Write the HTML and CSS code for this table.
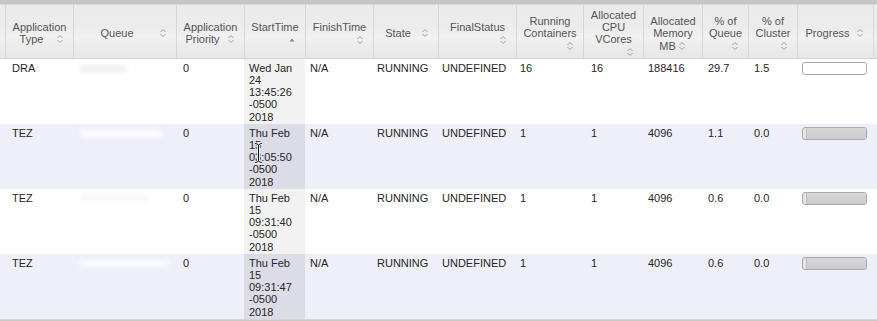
FILE: index.html
```html
<!DOCTYPE html>
<html>
<head>
<meta charset="utf-8">
<title>Applications</title>
<link rel="stylesheet" href="styles.css">
</head>
<body>
<div class="frame">
  <div class="topbar"></div>
  <table class="apps">
    <colgroup>
      <col class="w-gut"><col class="w-type"><col class="w-queue"><col class="w-prio"><col class="w-start"><col class="w-finish"><col class="w-state"><col class="w-final"><col class="w-run"><col class="w-vc"><col class="w-mem"><col class="w-pq"><col class="w-pc"><col class="w-prog"><col class="w-last">
    </colgroup>
    <thead>
      <tr>
        <th class="gut"></th>
        <th><div class="sw">Application Type<span class="si"><svg width="16" height="12" viewBox="0 0 16 12"><path d="M5.5 5 L8 2.5 L10.5 5 M5.5 7 L8 9.5 L10.5 7" fill="none" stroke="#a0a0a0"/></svg></span></div></th>
        <th><div class="sw">Queue<span class="si"><svg width="16" height="12" viewBox="0 0 16 12"><path d="M5.5 5 L8 2.5 L10.5 5 M5.5 7 L8 9.5 L10.5 7" fill="none" stroke="#a0a0a0"/></svg></span></div></th>
        <th><div class="sw">Application Priority<span class="si"><svg width="16" height="12" viewBox="0 0 16 12"><path d="M5.5 5 L8 2.5 L10.5 5 M5.5 7 L8 9.5 L10.5 7" fill="none" stroke="#a0a0a0"/></svg></span></div></th>
        <th><div class="sw">StartTime<span class="si"><svg width="16" height="12" viewBox="0 0 16 12"><path d="M5.5 7.5 L8 4.5 L10.5 7.5 Z" fill="#8a8a8a"/></svg></span></div></th>
        <th><div class="sw">FinishTime<span class="si"><svg width="16" height="12" viewBox="0 0 16 12"><path d="M5.5 5 L8 2.5 L10.5 5 M5.5 7 L8 9.5 L10.5 7" fill="none" stroke="#a0a0a0"/></svg></span></div></th>
        <th><div class="sw">State<span class="si"><svg width="16" height="12" viewBox="0 0 16 12"><path d="M5.5 5 L8 2.5 L10.5 5 M5.5 7 L8 9.5 L10.5 7" fill="none" stroke="#a0a0a0"/></svg></span></div></th>
        <th><div class="sw">FinalStatus<span class="si"><svg width="16" height="12" viewBox="0 0 16 12"><path d="M5.5 5 L8 2.5 L10.5 5 M5.5 7 L8 9.5 L10.5 7" fill="none" stroke="#a0a0a0"/></svg></span></div></th>
        <th><div class="sw">Running Containers<span class="si"><svg width="16" height="12" viewBox="0 0 16 12"><path d="M5.5 5 L8 2.5 L10.5 5 M5.5 7 L8 9.5 L10.5 7" fill="none" stroke="#a0a0a0"/></svg></span></div></th>
        <th><div class="sw">Allocated CPU VCores<span class="si"><svg width="16" height="12" viewBox="0 0 16 12"><path d="M5.5 5 L8 2.5 L10.5 5 M5.5 7 L8 9.5 L10.5 7" fill="none" stroke="#a0a0a0"/></svg></span></div></th>
        <th><div class="sw">Allocated Memory MB<span class="si inl"><svg width="10" height="12" viewBox="3 0 10 12"><path d="M5.5 5 L8 2.5 L10.5 5 M5.5 7 L8 9.5 L10.5 7" fill="none" stroke="#a0a0a0"/></svg></span></div></th>
        <th><div class="sw">% of Queue<span class="si"><svg width="16" height="12" viewBox="0 0 16 12"><path d="M5.5 5 L8 2.5 L10.5 5 M5.5 7 L8 9.5 L10.5 7" fill="none" stroke="#a0a0a0"/></svg></span></div></th>
        <th><div class="sw">% of Cluster<span class="si"><svg width="16" height="12" viewBox="0 0 16 12"><path d="M5.5 5 L8 2.5 L10.5 5 M5.5 7 L8 9.5 L10.5 7" fill="none" stroke="#a0a0a0"/></svg></span></div></th>
        <th><div class="sw">Progress<span class="si"><svg width="16" height="12" viewBox="0 0 16 12"><path d="M5.5 5 L8 2.5 L10.5 5 M5.5 7 L8 9.5 L10.5 7" fill="none" stroke="#a0a0a0"/></svg></span></div></th>
        <th class="last"></th>
      </tr>
    </thead>
    <tbody>
      <tr class="odd">
        <td class="gut"></td>
        <td class="c-type">DRA</td>
        <td class="c-queue"><span class="redact r1"></span></td>
        <td class="c-prio">0</td>
        <td class="c-start sorted">Wed Jan 24 13:45:26 -0500 2018</td>
        <td>N/A</td>
        <td class="c-state">RUNNING</td>
        <td class="c-final">UNDEFINED</td>
        <td class="c-run">16</td>
        <td class="c-vc">16</td>
        <td>188416</td>
        <td class="c-pq">29.7</td>
        <td class="c-pc">1.5</td>
        <td><div class="pbar"></div></td>
        <td></td>
      </tr>
      <tr class="even">
        <td class="gut"></td>
        <td class="c-type">TEZ</td>
        <td class="c-queue"><span class="redact r2"></span></td>
        <td class="c-prio">0</td>
        <td class="c-start sorted">Thu Feb 15 03:05:50 -0500 2018</td>
        <td>N/A</td>
        <td class="c-state">RUNNING</td>
        <td class="c-final">UNDEFINED</td>
        <td class="c-run">1</td>
        <td class="c-vc">1</td>
        <td>4096</td>
        <td class="c-pq">1.1</td>
        <td class="c-pc">0.0</td>
        <td><div class="pbar"><div class="pval"></div></div></td>
        <td></td>
      </tr>
      <tr class="odd">
        <td class="gut"></td>
        <td class="c-type">TEZ</td>
        <td class="c-queue"><span class="redact r3"></span></td>
        <td class="c-prio">0</td>
        <td class="c-start sorted">Thu Feb 15 09:31:40 -0500 2018</td>
        <td>N/A</td>
        <td class="c-state">RUNNING</td>
        <td class="c-final">UNDEFINED</td>
        <td class="c-run">1</td>
        <td class="c-vc">1</td>
        <td>4096</td>
        <td class="c-pq">0.6</td>
        <td class="c-pc">0.0</td>
        <td><div class="pbar"><div class="pval"></div></div></td>
        <td></td>
      </tr>
      <tr class="even">
        <td class="gut"></td>
        <td class="c-type">TEZ</td>
        <td class="c-queue"><span class="redact r4"></span></td>
        <td class="c-prio">0</td>
        <td class="c-start sorted">Thu Feb 15 09:31:47 -0500 2018</td>
        <td>N/A</td>
        <td class="c-state">RUNNING</td>
        <td class="c-final">UNDEFINED</td>
        <td class="c-run">1</td>
        <td class="c-vc">1</td>
        <td>4096</td>
        <td class="c-pq">0.6</td>
        <td class="c-pc">0.0</td>
        <td><div class="pbar"><div class="pval"></div></div></td>
        <td></td>
      </tr>
    </tbody>
  </table>
  <div class="bottombar"></div>
  <svg class="cursor" width="9" height="22" viewBox="0 0 9 22">
    <path d="M1 1.5 Q4.5 1.5 4.5 3.5 Q4.5 1.5 8 1.5 M4.5 3.5 V18.5 M1 20.5 Q4.5 20.5 4.5 18.5 Q4.5 20.5 8 20.5" fill="none" stroke="#ffffff" stroke-width="2.6"/>
    <path d="M1 1.5 Q4.5 1.5 4.5 3.5 Q4.5 1.5 8 1.5 M4.5 3.5 V18.5 M1 20.5 Q4.5 20.5 4.5 18.5 Q4.5 20.5 8 20.5" fill="none" stroke="#111111" stroke-width="1"/>
  </svg>
</div>
</body>
</html>
```

FILE: styles.css
```css
html, body {
  margin: 0;
  padding: 0;
  background: #ffffff;
}

.frame {
  position: relative;
  width: 877px;
  height: 321px;
  overflow: hidden;
  font-family: "Liberation Sans", Arial, sans-serif;
  font-size: 11px;
  line-height: 12.2px;
  color: #262626;
}

.topbar {
  height: 4px;
  background: #c6c6c6;
  border-bottom: 1px solid #dadada;
}

.apps {
  table-layout: fixed;
  border-collapse: separate;
  border-spacing: 0;
  width: 893px;
}

.w-gut { width: 5px; }
.w-type { width: 68px; }
.w-queue { width: 103px; }
.w-prio { width: 68px; }
.w-start { width: 61px; }
.w-finish { width: 68px; }
.w-state { width: 65px; }
.w-final { width: 78px; }
.w-run { width: 67px; }
.w-vc { width: 60px; }
.w-mem { width: 59px; }
.w-pq { width: 46px; }
.w-pc { width: 49px; }
.w-prog { width: 76px; }
.w-last { width: 20px; }

.apps th {
  padding: 4px 5px 0 5px;
  font-weight: normal;
  color: #555555;
  text-align: center;
  vertical-align: middle;
  background: linear-gradient(#ebebeb 0%, #ececec 45%, #f1f1f1 62%, #ebebeb 78%, #e8e8e8 100%);
  border-left: 1px solid #d6d6d6;
  border-bottom: 1px solid #d3d3d3;
}

.apps th.gut {
  padding: 0;
  border-left: none;
}

.sw {
  text-align: center;
}

.si {
  float: right;
  width: 16px;
  height: 12.2px;
  display: flex;
  align-items: center;
  justify-content: center;
}

.si svg {
  display: block;
}

.si.inl {
  float: none;
  display: inline-flex;
  width: 10px;
  vertical-align: top;
  margin-left: 1px;
}

.apps td {
  padding: 3px 5px 1px 5px;
  vertical-align: top;
  text-align: left;
  white-space: normal;
}

.apps td.gut {
  padding: 0;
}

tr.odd td { background: #ffffff; }
tr.even td { background: #efeffa; }
tr.odd td.sorted { background: #f2f2f2; }
tr.even td.sorted { background: #dcdce7; }

.c-type { padding-left: 7px !important; }
.c-prio { padding-left: 7px !important; }
.c-state, .c-final, .c-run { padding-left: 4px !important; }
.c-vc { padding-left: 8px !important; }
.c-pq, .c-pc { padding-left: 6px !important; }

.redact {
  display: block;
  height: 7px;
  margin: 3px 0 0 2px;
  filter: blur(2.5px);
}
.r1 { width: 47px; background: #efefef; }
.r2 { width: 82px; background: #fbfbff; }
.r3 { width: 70px; background: #f8f8f8; }
.r4 { width: 88px; background: #fbfbff; }

.pbar {
  box-sizing: border-box;
  width: 65px;
  height: 13px;
  border: 1px solid #a9a9a9;
  border-radius: 3px;
  background: #ffffff;
  overflow: hidden;
  display: flex;
}

.pval {
  flex: 1;
  margin-left: 3px;
  border-left: 1px solid #bdbdbd;
  background: linear-gradient(#d8d8d8, #cbcbcb);
}

.even .pbar, .odd .pbar:has(.pval) {
  background: #e4e4e4;
}

.bottombar {
  height: 10px;
  background: #c8c8c8;
  border-top: 1px solid #d4d4d4;
}

.cursor {
  position: absolute;
  left: 254px;
  top: 142px;
}
```
